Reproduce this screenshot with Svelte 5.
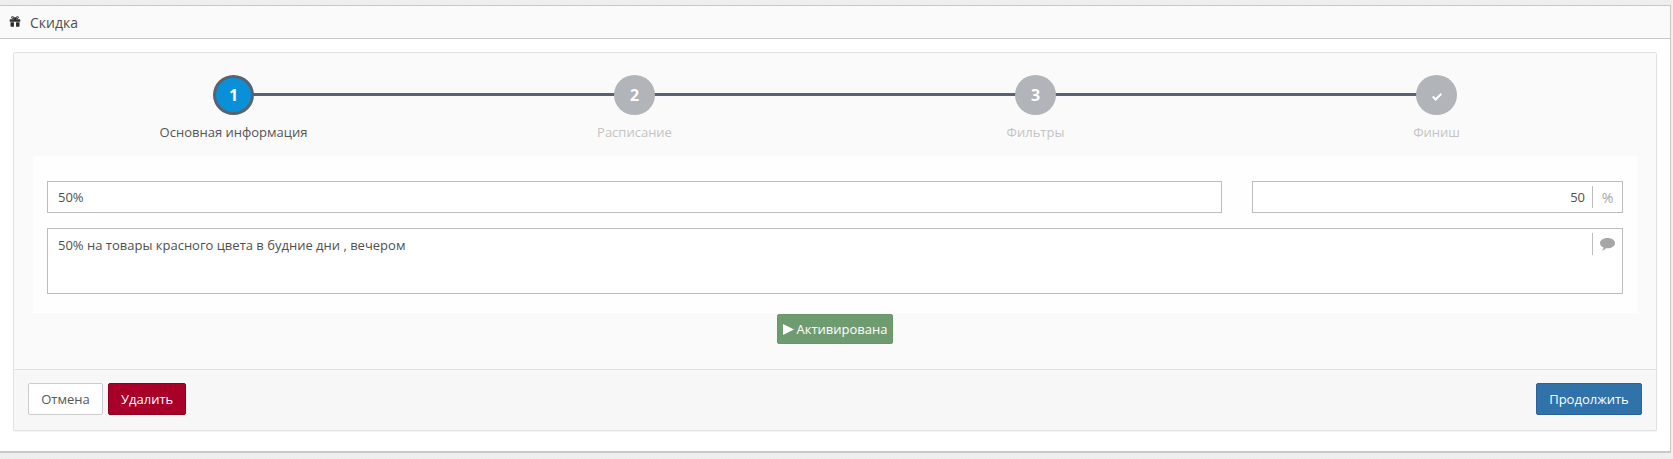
<script>
  const steps = [
    { n: '1', label: 'Основная информация', active: true },
    { n: '2', label: 'Расписание' },
    { n: '3', label: 'Фильтры' },
    { n: '', label: 'Финиш', check: true }
  ];
</script>

<div class="page">
  <section class="panel">
    <header class="head">
      <svg class="gift" viewBox="0 0 16 14" aria-hidden="true">
        <path d="M1 4h5.600v-.3C5 3.600 3.400 3 3 2c-.4-1 .3-2 1.400-2C6 0 7.400 1.200 8 2.300 8.600 1.200 10 0 11.600 0 12.700 0 13.400 1 13 2c-.4 1-2 1.600-3.600 1.700V4H15v3.200H1zM4.600 1.300c-.5 0-.6.400-.4.700.3.400 1.300.6 2.300.6-.3-.6-1.100-1.300-1.900-1.300zm6.800 0c-.8 0-1.600.7-1.900 1.300 1 0 2-.2 2.300-.6.200-.3.100-.7-.4-.7zM2 8h4.600v6H3c-.6 0-1-.4-1-1zm7.400 0H14v5c0 .6-.4 1-1 1H9.400z"/>
      </svg>
      <span>Скидка</span>
    </header>
    <div class="content">
      <div class="card">
        <div class="body">
          <div class="wizard">
            <ol class="steps">
              {#each steps as s, i}
                <li class="step" class:active={s.active} class:last={i === steps.length - 1}>
                  <div class="dot">
                    {#if s.check}
                      <svg class="check" viewBox="0 0 10 8" aria-hidden="true"><path d="M0 4.300 1.500 2.800 3.700 5 8.500 0 10 1.500 3.700 8z"/></svg>
                    {:else}
                      {s.n}
                    {/if}
                  </div>
                  <div class="label">{s.label}</div>
                </li>
              {/each}
            </ol>
            <div class="form">
              <div class="row">
                <div class="field name"><span class="val">50%</span></div>
                <div class="field num">
                  <span class="val right">50</span>
                  <span class="addon">%</span>
                </div>
              </div>
              <div class="field area">
                <span class="val">50% на товары красного цвета в будние дни , вечером</span>
                <span class="addon">
                  <svg class="comment" viewBox="0 0 14 12" aria-hidden="true"><path d="M14 4.800C14 7.400 10.900 9.500 7 9.500c-.5 0-.9 0-1.300-.1C4.700 10.500 3.300 11.300 1.800 11.500c.7-.8 1.300-1.600 1.500-2.800C1.300 7.900 0 6.400 0 4.800 0 2.100 3.100 0 7 0s7 2.100 7 4.800z"/></svg>
                </span>
              </div>
            </div>
          </div>
          <div class="status">
            <button class="btn green">
              <svg class="play" viewBox="0 0 10 10" aria-hidden="true"><path d="M0 0 10 5 0 10z"/></svg>
              Активирована
            </button>
          </div>
        </div>
        <footer class="foot">
          <div class="left">
            <button class="btn plain">Отмена</button>
            <button class="btn red">Удалить</button>
          </div>
          <button class="btn blue">Продолжить</button>
        </footer>
      </div>
    </div>
  </section>
</div>

<style>
  :global(body) {
    margin: 0;
    background: repeating-conic-gradient(#f0f0f0 0 25%, #ececec 0 50%) 0 0 / 3px 3px;
    font-family: "Open Sans", "DejaVu Sans", sans-serif;
    font-size: 13px;
    color: #4f4f4f;
  }
  .page {
    height: 459px;
    box-sizing: border-box;
    padding: 5px 2px 0 0;
    overflow: hidden;
  }
  .panel {
    background: #fff;
    border: 1px solid #c8c8c8;
    border-left: 0;
    border-bottom-width: 2px;
    height: 448px;
    box-sizing: border-box;
  }
  .head {
    height: 33px;
    box-sizing: border-box;
    border-bottom: 1px solid #c8c8c8;
    background: #fafafa;
    display: flex;
    align-items: center;
    gap: 9px;
    padding: 0 0 0 9px;
    font-size: 14px;
  }
  .gift { width: 12px; height: 11px; fill: #2e2e2e; margin-top: -2px; }
  .content { padding: 13px 13px 0 13px; }
  .card {
    border: 1px solid #e2e2e2;
    border-radius: 2px;
    background: #fafafa;
    box-shadow: 0 1px 1px rgba(0,0,0,.05);
    height: 379px;
    box-sizing: border-box;
    display: flex;
    flex-direction: column;
  }
  .body { flex: 1; padding: 22px 19px 0; min-height: 0; }
  .steps {
    list-style: none;
    margin: 0;
    padding: 0;
    display: flex;
    height: 81px;
  }
  .step {
    flex: 1;
    position: relative;
    display: flex;
    flex-direction: column;
    align-items: center;
  }
  .step::after {
    content: "";
    position: absolute;
    left: 50%;
    width: 100%;
    top: 18px;
    height: 3px;
    background: #59636f;
  }
  .step.last::after { display: none; }
  .dot {
    position: relative;
    z-index: 1;
    width: 41px;
    height: 40px;
    box-sizing: border-box;
    border-radius: 50%;
    background: #b1b4b8;
    color: #fff;
    font-weight: 700;
    font-size: 16px;
    display: flex;
    align-items: center;
    justify-content: center;
  }
  .active .dot {
    background: #0a90d8;
    border: 3px solid #59636f;
  }
  .check { width: 10px; height: 8px; fill: #fff; margin-top: 3px; }
  .label {
    margin-top: 8px;
    line-height: 19px;
    font-size: 13px;
    color: #c4c4c4;
  }
  .active .label { color: #555; }
  .form {
    background: #fefefe;
    padding: 25px 14px 20px 14px;
    height: 157px;
    box-sizing: border-box;
  }
  .row { display: flex; gap: 30px; margin-bottom: 15px; }
  .field {
    border: 1px solid #bdbdbd;
    background: #fff;
    display: flex;
    box-sizing: border-box;
    position: relative;
  }
  .name { flex: 1; height: 32px; align-items: center; padding-left: 10px; }
  .num { width: 371px; height: 32px; align-items: center; padding-right: 30px; justify-content: flex-end; }
  .area { height: 66px; padding: 7px 0 0 10px; line-height: 18px; }
  .val { color: #4f4f4f; }
  .right { padding-right: 7px; }
  .addon {
    position: absolute;
    right: 0;
    top: 4px;
    width: 30px;
    height: 22px;
    box-sizing: border-box;
    border-left: 1px solid #bdbdbd;
    color: #a6a6a6;
    font-size: 14px;
    display: flex;
    align-items: center;
    justify-content: center;
  }
  .comment { width: 15px; height: 13px; fill: #a6a6a6; margin-top: 1px; }
  .status { display: flex; justify-content: center; padding-top: 1px; }
  .btn {
    font: inherit;
    font-size: 13px;
    height: 32px;
    box-sizing: border-box;
    border-radius: 2px;
    border: 1px solid transparent;
    padding: 0 12px;
    cursor: pointer;
  }
  .green {
    height: 30px;
    width: 116px;
    padding: 0;
    background: #6f9b71;
    border-color: #6a9469;
    color: #fff;
    display: flex;
    align-items: center;
    justify-content: center;
    gap: 3px;
  }
  .play { width: 11px; height: 11px; fill: #fff; }
  .foot {
    height: 61px;
    box-sizing: border-box;
    background: #f7f7f7;
    border-top: 1px solid #e2e2e2;
    display: flex;
    align-items: flex-start;
    justify-content: space-between;
    padding: 13px 14px 0 14px;
  }
  .left { display: flex; gap: 5px; }
  .plain { background: #fff; border-color: #ccc; color: #555; width: 75px; }
  .red { background: #a80029; border-color: #8c0022; color: #fff; width: 78px; }
  .blue { background: #3072aa; border-color: #2a6496; color: #fff; width: 106px; }
</style>
